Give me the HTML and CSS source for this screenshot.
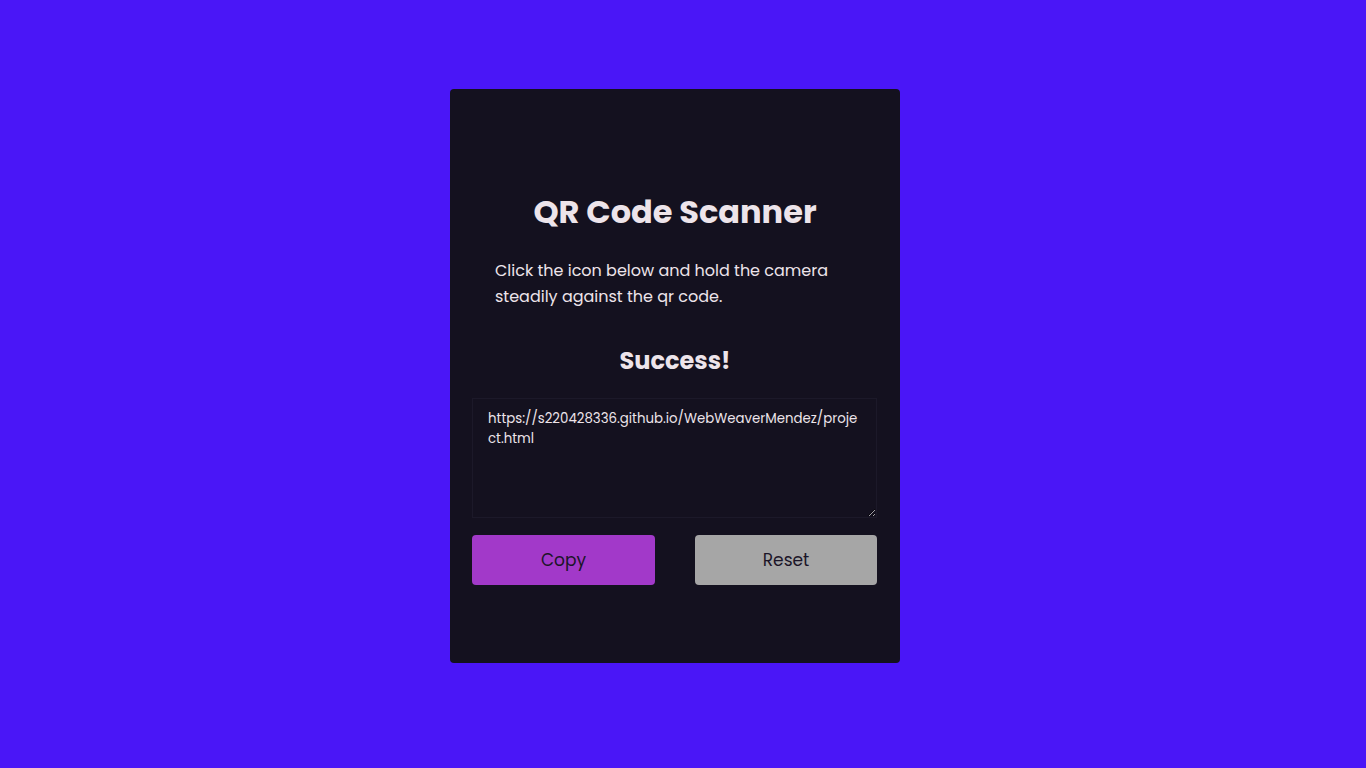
FILE: index.html
```html
<!DOCTYPE html>
<html lang="en">
<head>
<meta charset="utf-8">
<title>QR Code Scanner</title>
<link rel="stylesheet" href="styles.css">
</head>
<body>
<main class="card">
  <h1 class="title">QR Code Scanner</h1>
  <p class="intro">Click the icon below and hold the camera steadily against the qr code.</p>
  <h2 class="status">Success!</h2>
  <textarea class="result" spellcheck="false">https://s220428336.github.io/WebWeaverMendez/project.html</textarea>
  <div class="actions">
    <button class="btn btn-copy" type="button">Copy</button>
    <button class="btn btn-reset" type="button">Reset</button>
  </div>
</main>
</body>
</html>
```
FILE: styles.css
```css
* { box-sizing: border-box; }
html { overflow-y: scroll; }
html, body { margin: 0; }
body {
  background: #4a16f7;
  font-family: "Poppins", "Open Sans", "Noto Sans", sans-serif;
  color: #ede4ea;
  padding: 89px 16px 121px 0;
  display: flex;
  justify-content: center;
}
.card {
  width: 450px;
  height: 574px;
  background: #14111f;
  border-radius: 4px;
  padding: 99px 22px 0;
  display: flex;
  flex-direction: column;
}
.title {
  margin: 0;
  text-align: center;
  font-size: 32px;
  line-height: 48px;
  font-weight: 700;
}
.intro {
  margin: 22px 0 0;
  padding: 0 23px;
  font-size: 16px;
  line-height: 26px;
}
.status {
  margin: 33px 0 0;
  text-align: center;
  font-size: 24px;
  line-height: 36px;
  font-weight: 700;
}
.result {
  margin: 19px 0 0;
  width: 405px;
  height: 120px;
  background: #14111f;
  color: #ede4ea;
  border: 1px solid #1c1929;
  border-radius: 0;
  padding: 10px 15px;
  font-family: inherit;
  font-size: 13.333px;
  line-height: 20px;
  resize: vertical;
  outline: none;
}
.actions {
  width: 405px;
  margin-top: 17px;
  display: flex;
  justify-content: space-between;
}
.btn {
  width: 183px;
  height: 50px;
  border: none;
  border-radius: 4px;
  font-family: inherit;
  font-size: 17px;
  color: #1b1528;
}
.btn-copy { background: #a239c9; }
.btn-reset { background: #a6a6a6; width: 182px; }
```
